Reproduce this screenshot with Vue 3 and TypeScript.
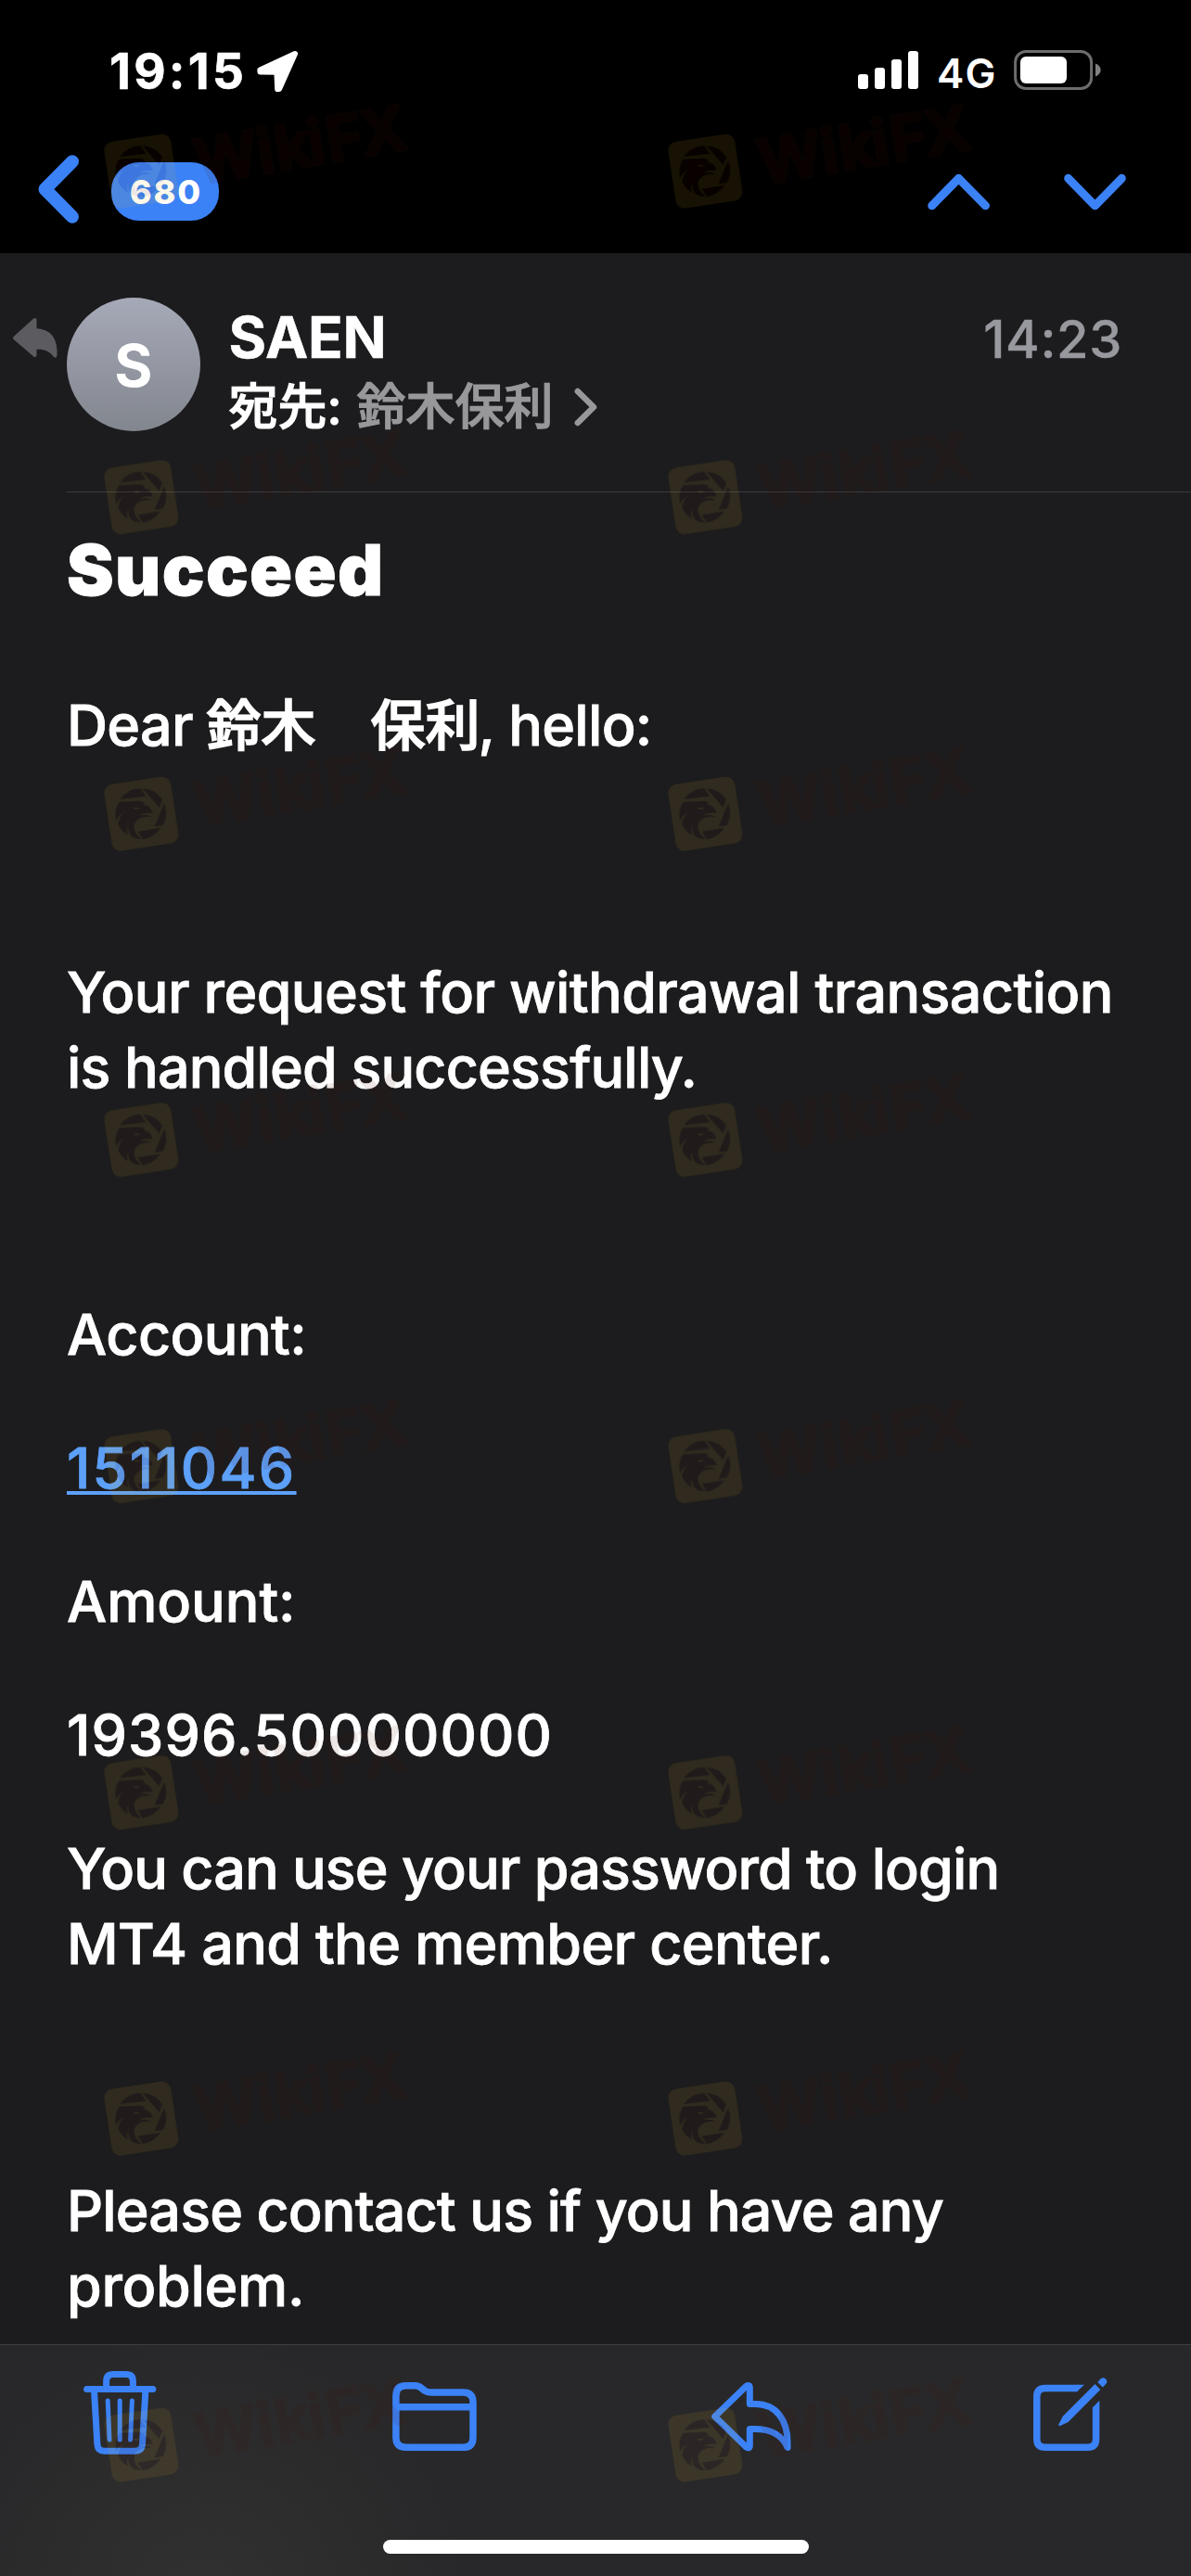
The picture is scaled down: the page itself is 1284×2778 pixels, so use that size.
<script setup lang="ts">
interface Line {
  text: string
  spacing: number
  link?: boolean
}
interface Paragraph {
  lines: Line[]
  gap?: boolean
}

const paragraphs: Paragraph[] = [
  {
    gap: true,
    lines: [
      { text: 'Your request for withdrawal transaction', spacing: -0.59 },
      { text: 'is handled successfully.', spacing: -0.82 },
    ],
  },
  { gap: true, lines: [{ text: 'Account:', spacing: -0.55 }] },
  { lines: [{ text: '1511046', spacing: 2.3, link: true }] },
  { lines: [{ text: 'Amount:', spacing: -0.05 }] },
  { lines: [{ text: '19396.50000000', spacing: 1.15 }] },
  {
    lines: [
      { text: 'You can use your password to login', spacing: -0.91 },
      { text: 'MT4 and the member center.', spacing: -0.63 },
    ],
  },
  {
    gap: true,
    lines: [
      { text: 'Please contact us if you have any', spacing: -0.86 },
      { text: 'problem.', spacing: -0.3 },
    ],
  },
]

const stampRows = [144, 495.5, 837, 1188.5, 1540.5, 1892.5, 2244, 2596]
const stampColumns = [112, 720]
const stamps = stampRows.flatMap((y) => stampColumns.map((x) => ({ x, y })))
</script>

<template>
  <div class="screen">
    <header class="top">
      <div class="status">
        <span class="clock">19:15</span>
        <svg class="location" width="46" height="48" viewBox="276 53 46 48">
          <path
            d="M318 58 L280.3 75.4 L280.5 77.6 L298.4 77.8 L299.2 96 L301 96 Z"
            fill="#fff" stroke="#fff" stroke-width="6" stroke-linejoin="round"
          />
        </svg>
        <svg class="signal" width="65" height="42" viewBox="925 55 65 42" fill="#fff">
          <rect x="925" y="80" width="11" height="16" rx="3" />
          <rect x="943" y="73" width="11" height="23" rx="3" />
          <rect x="961" y="64" width="11" height="32" rx="3" />
          <rect x="979" y="55" width="11" height="41" rx="3" />
        </svg>
        <span class="network">4G</span>
        <svg width="95" height="44" viewBox="1093 54 95 44">
          <rect x="1094.6" y="55.5" width="82" height="40" rx="11.5" fill="none" stroke="#6c6c6c" stroke-width="3" />
          <rect x="1100" y="61" width="50" height="29" rx="6" fill="#fff" />
          <path d="M1181 68.5 C1188.5 71 1188.5 80 1181 82.5 Z" fill="#808080" />
        </svg>
      </div>
      <nav class="nav">
        <svg width="46" height="80" viewBox="41 166.5 46 80">
          <path d="M78 173.7 L48.5 203.5 L78 233.3" class="line" stroke-width="14" />
        </svg>
        <span class="badge">680</span>
        <svg class="up" width="68" height="44" viewBox="1000 184.5 68 44">
          <path d="M1004.7 221.3 L1033.5 191.8 L1062.5 221.3" class="line" stroke-width="9" />
        </svg>
        <svg width="68" height="44" viewBox="1147 184.5 68 44">
          <path d="M1151.7 191.8 L1180.5 221.3 L1209.3 191.8" class="line" stroke-width="9" />
        </svg>
      </nav>
    </header>

    <section class="sender">
      <svg width="72" height="144" viewBox="0 321 72 144">
        <path
          d="M37.5 345 L16 364.5 L37.5 383 L37.5 374.5 C49 374 55 377 59.5 383.5 C60.5 366 54 356.5 37.5 356 Z"
          fill="#5b5b60" stroke="#5b5b60" stroke-width="4" stroke-linejoin="round"
        />
      </svg>
      <div class="avatar">S</div>
      <div class="who">
        <div class="name">SAEN</div>
        <div class="to">
          <span>宛先:</span>
          <span class="recipient">鈴木保利</span>
          <svg width="25" height="42" viewBox="618.5 417 25 42">
            <path d="M622.3 421 L639.5 438 L622.3 455" fill="none" stroke="#98989b" stroke-width="6.5" stroke-linecap="round" stroke-linejoin="round" />
          </svg>
        </div>
      </div>
      <time class="time">14:23</time>
    </section>
    <div class="rule"></div>

    <main class="message">
      <h1 class="subject">Succeed</h1>
      <p class="greeting">Dear <span class="kanji">鈴木　保利</span>, hello:</p>
      <p v-for="(p, i) in paragraphs" :key="i" :class="{ spaced: p.gap }">
        <span v-for="l in p.lines" :key="l.text" class="row">
          <span :class="{ link: l.link }" :style="{ letterSpacing: l.spacing + 'px' }">{{ l.text }}</span>
        </span>
      </p>
    </main>

    <footer class="toolbar">
      <div class="actions">
        <svg width="80" height="100" viewBox="90 2550 80 100">
          <g class="line" stroke-width="7">
            <path d="M114.6 2576 V2568 Q114.6 2560.5 122 2560.5 H136 Q143.4 2560.5 143.4 2568 V2576" />
            <path d="M93.6 2576.5 H164.8" />
            <path d="M101.5 2578 L104.9 2636 Q105.4 2643.2 112.4 2643.2 H146 Q153 2643.2 153.5 2636 L156.9 2578" />
          </g>
          <path d="M116.2 2589 L118 2631 M129.2 2589 V2631 M142.4 2589 L140.6 2631" class="line" stroke-width="5" />
        </svg>
        <svg class="folder" width="92" height="100" viewBox="423 2550 92 100">
          <path
            d="M426.9 2583.5 Q426.9 2572.8 437.5 2572.8 H447.5 Q451.5 2572.8 454.5 2575.5 L457.6 2578 Q460.3 2580 464.5 2580 H499.5 Q510 2580 510 2590.5 V2628.8 Q510 2639.3 499.5 2639.3 H437.5 Q426.9 2639.3 426.9 2628.8 Z M427 2595.8 H510"
            class="line" stroke-width="7.5"
          />
        </svg>
        <svg class="reply" width="87" height="100" viewBox="767 2550 87 100">
          <path
            d="M770.7 2606 L804.5 2573.3 Q808.3 2571 808.3 2575 V2592.6 H814 C838 2592.6 849 2611 849 2634 V2639.5 C844 2627.5 832 2619.6 814 2619.6 H808.3 V2637.3 Q808.3 2641.3 804.5 2639 Z"
            class="line" stroke-width="7"
          />
        </svg>
        <svg class="compose" width="81" height="100" viewBox="1114 2550 81 100">
          <path
            d="M1161.5 2575.5 H1127 Q1117.8 2575.5 1117.8 2584.5 V2630.3 Q1117.8 2639.3 1127 2639.3 H1172.4 Q1181.6 2639.3 1181.6 2630.3 V2596"
            fill="none" stroke="#3b82f7" stroke-width="7.5"
          />
          <g fill="#3b82f7">
            <path d="M1161 2571.75 H1169 L1161 2579.25 Z M1185.35 2588.8 V2596.3 H1177.85 Z" />
            <path d="M1180.5 2571 L1186.3 2577 L1151.6 2612 L1142.4 2616.2 Q1140.8 2616.2 1141.3 2614.8 L1145.6 2606 Z" />
            <path d="M1183.2 2569 L1186.8 2565.3 Q1189.4 2563 1192 2565.6 Q1194.6 2568.4 1192.4 2570.8 L1188.9 2574.6 Z" />
          </g>
        </svg>
      </div>
      <div class="home"></div>
    </footer>

    <svg class="stamps" width="1284" height="2778" viewBox="0 0 1284 2778" aria-hidden="true">
      <g v-for="s in stamps" :key="`${s.x}-${s.y}`" opacity="0.1" :transform="`translate(${s.x - 20} ${s.y - 56.7}) scale(0.33333)`">
        <rect x="72" y="183" width="218" height="218" rx="29" fill="#e6b41e" transform="rotate(-8.6 181 292)" />
        <g fill="#500e08">
          <path d="M112 245 A83 83 0 0 1 178 210 L196 235 Z" />
          <path d="M185 210 A83 83 0 0 1 249 246 L239 272 Z" />
          <path d="M255 257 A83 83 0 0 1 251 329 L224 333 Z" />
          <path d="M243 337 A83 83 0 0 1 185 374 L170 349 Z" />
          <path
            d="M110 253 L176 250 L190 254 L190 263 C205 265 215 275 217 291 Q210 287 202 290 C194 288 184 290 176 297 L186 296 C196 294 207 297 214 303 C190 297 164 308 158 327 C155 345 166 362 181 374 C168 373 158 370 152 367 C142 358 137 346 138 330 C133 342 134 354 139 361 C125 354 113 342 106 325 C108 308 116 296 125 288 C113 294 104 304 100 315 C94 290 98 268 110 253 Z"
          />
        </g>
        <path d="M155 271 L177 272 Q170 281 160 277 Z" fill="#e6b41e" />
        <g transform="translate(366 335) rotate(-9.6)" class="brand">
          <text x="0 205 263 371 431 545" y="0" stroke="#503c14" stroke-width="12">WikiFX</text>
          <text x="0 205 263 371 431 545" y="0" fill="#500e08" stroke="#500e08" stroke-width="8">WikiFX</text>
        </g>
      </g>
    </svg>
  </div>
</template>

<style>
body {
  background: #1c1c1e;
}
</style>

<style scoped>
.screen {
  position: relative;
  width: 1284px;
  height: 2778px;
  overflow: hidden;
  display: flex;
  flex-direction: column;
  background: #1c1c1e;
  color: #fff;
  font-family: Inter, "Noto Sans CJK JP", sans-serif;
}
svg {
  display: block;
  flex: none;
}
.line {
  fill: none;
  stroke: #3b82f7;
  stroke-linecap: round;
  stroke-linejoin: round;
}
.top {
  height: 273px;
  flex: none;
  background: #000;
}
.status {
  height: 152px;
  display: flex;
  align-items: center;
  padding: 0 96px 0 118px;
}
.clock {
  width: 158px;
  padding-top: 2px;
  font-size: 53px;
  font-weight: 700;
  line-height: 60px;
  letter-spacing: 3.3px;
  -webkit-text-stroke: 0.6px currentColor;
}
.location {
  margin-top: 2px;
}
.signal {
  margin-left: auto;
}
.network {
  width: 83px;
  margin-left: 20px;
  padding-top: 5px;
  font-size: 44px;
  font-weight: 600;
  line-height: 52px;
  letter-spacing: 1.2px;
}
.nav {
  height: 109px;
  display: flex;
  align-items: center;
  padding: 0 69px 0 41px;
}
.badge {
  width: 116px;
  height: 63px;
  margin-left: 33px;
  border-radius: 30px;
  background: #3b82f7;
  font-size: 36px;
  font-weight: 800;
  line-height: 64px;
  letter-spacing: 1.9px;
  text-indent: 1.9px;
  text-align: center;
}
.up {
  margin-left: auto;
  margin-right: 79px;
}
.sender {
  height: 209px;
  flex: none;
  display: flex;
  align-items: flex-start;
  padding-top: 48px;
}
.avatar {
  width: 144px;
  height: 144px;
  flex: none;
  border-radius: 50%;
  background: linear-gradient(#a6a9b7, #82868e);
  font-size: 63px;
  font-weight: 700;
  line-height: 146px;
  text-align: center;
}
.who {
  margin-left: 30.5px;
  padding-top: 6px;
}
.name {
  font-size: 62px;
  font-weight: 700;
  line-height: 74px;
  letter-spacing: -0.2px;
  -webkit-text-stroke: 0.5px currentColor;
}
.to {
  display: flex;
  align-items: center;
  margin-top: 8px;
  font-size: 53px;
  font-weight: 500;
  line-height: 60px;
  -webkit-text-stroke: 1.2px currentColor;
}
.recipient {
  margin: 0 22px 0 16px;
  color: #98989b;
}
.time {
  margin: 8px 74px 0 auto;
  color: #98989f;
  font-size: 56px;
  font-weight: 500;
  line-height: 74px;
  letter-spacing: 0.63px;
  -webkit-text-stroke: 0.4px currentColor;
}
.rule {
  flex: none;
  height: 1px;
  margin-left: 72px;
  background: #3b3b40;
}
.message {
  flex: 1;
  min-height: 0;
  overflow: hidden;
  padding: 38px 0 0 72px;
  font-size: 61px;
  font-weight: 500;
  line-height: 81px;
  white-space: nowrap;
  -webkit-text-stroke: 0.8px currentColor;
}
.subject {
  margin: 0 0 83px;
  font-size: 76px;
  font-weight: 900;
  line-height: 90px;
  letter-spacing: 1.36px;
}
.message p {
  margin: 63px 0 0;
}
.message p.greeting {
  margin: 0;
  letter-spacing: -0.7px;
}
.message p.spaced {
  margin-top: 207px;
}
.kanji {
  margin: 0 -2px 0 -1px;
  font-size: 59px;
  letter-spacing: 0;
  line-height: 0;
  -webkit-text-stroke: 1.6px currentColor;
}
.row {
  display: block;
}
.link {
  color: #5da0f9;
  text-decoration: underline;
  text-decoration-thickness: 4px;
  text-underline-offset: 3px;
  text-decoration-skip-ink: none;
}
.toolbar {
  flex: none;
  height: 250px;
  box-sizing: border-box;
  border-top: 1px solid #3e3e41;
  background: radial-gradient(circle 290px at 220px 280px, #313131, #28282a) #28282a;
}
.actions {
  display: flex;
  padding: 21px 0 0 90px;
}
.folder {
  margin-left: 253px;
}
.reply {
  margin-left: 252px;
}
.compose {
  margin-left: 260px;
}
.home {
  width: 459px;
  height: 15px;
  margin: 89px auto 0;
  border-radius: 8px;
  background: #fff;
}
.stamps {
  position: absolute;
  inset: 0;
  pointer-events: none;
}
.brand text {
  font-family: Inter, sans-serif;
  font-size: 200px;
  font-weight: 600;
  stroke-linejoin: round;
}
</style>
